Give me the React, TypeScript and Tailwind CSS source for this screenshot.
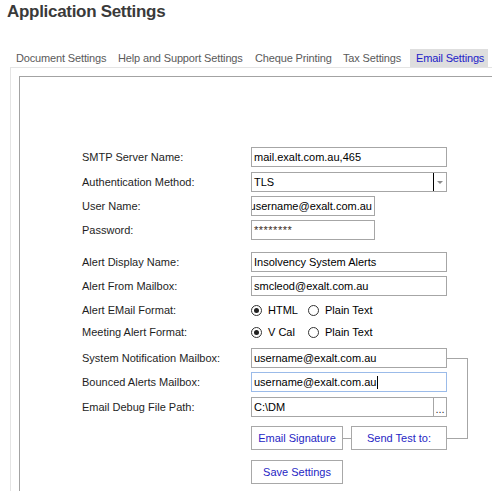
import React from 'react';

const tabs = [
  { label: 'Document Settings', w: 'w-[102px]' },
  { label: 'Help and Support Settings', w: 'w-[137px]' },
  { label: 'Cheque Printing', w: 'w-[88px]' },
  { label: 'Tax Settings', w: 'w-[73px]' },
  { label: 'Email Settings', w: 'w-[78px]', active: true },
];

const Label: React.FC<{ children: React.ReactNode }> = ({ children }) => (
  <div className="w-[169px] shrink-0 text-[#1e1e1e]">{children}</div>
);

const Box: React.FC<{ w?: string; children?: React.ReactNode; focus?: boolean; end?: boolean }> = ({ w = 'w-[196px]', children, focus, end }) => (
  <div className={`${w} h-[20px] border ${focus ? 'border-[#9bbbe9]' : 'border-[#a6a6a6]'} bg-white flex items-center overflow-hidden ${end ? 'justify-end' : ''}`}>
    {children}
  </div>
);

const Radio: React.FC<{ checked?: boolean; label: string; w?: string }> = ({ checked, label, w }) => (
  <div className={`flex items-center ${w ?? ''}`}>
    <div className="w-[11px] h-[11px] rounded-full border border-[#333] flex items-center justify-center bg-white">
      {checked && <div className="w-[5px] h-[5px] rounded-full bg-[#222]" />}
    </div>
    <span className="ml-[6px] text-black">{label}</span>
  </div>
);

const Btn: React.FC<{ w: string; children: React.ReactNode }> = ({ w, children }) => (
  <div className={`${w} h-[24px] border border-[#a8a8a8] bg-white flex items-center justify-center text-[#2626c4] whitespace-nowrap`}>
    {children}
  </div>
);

export default function App() {
  return (
    <div className="w-[492px] h-[491px] overflow-hidden bg-white font-['Liberation_Sans',Arial,sans-serif]">
      <h1 className="pl-[7px] pt-[2px] text-[17px] leading-[20px] font-bold text-[#3a3a3a] tracking-[-0.3px]">
        Application Settings
      </h1>

      {/* tabs */}
      <div className="mt-[27px] pl-[10px] flex h-[18px] text-[11px] leading-[18px] tracking-[-0.15px]">
        {tabs.map(t => (
          <div
            key={t.label}
            className={`${t.w} shrink-0 pl-[6px] whitespace-nowrap ${t.active ? 'bg-[#dedede] text-[#2222c8] pl-[5px]' : 'text-[#5a5a5a]'}`}
          >
            {t.label}
          </div>
        ))}
      </div>

      <div className="ml-[10px] border-l border-t border-[#e4e4e4] pl-[8px] pt-[8px] h-[430px]">
        <div className="border-l border-t border-[#a3a3a3] h-[440px] pl-[62px] pt-[70px] text-[11px] leading-[20px]">
          <div className="relative">
            <div className="flex items-center h-[20px]">
              <Label>SMTP Server Name:</Label>
              <Box><span className="pl-[2px] text-black">mail.exalt.com.au,465</span></Box>
            </div>
            <div className="flex items-center h-[20px] mt-[5px]">
              <Label>Authentication Method:</Label>
              <Box>
                <span className="flex-1 pl-[2px] text-black">TLS</span>
                <div className="w-[13px] h-full border-l border-black flex items-center justify-center">
                  <div className="w-0 h-0 border-l-[3px] border-r-[3px] border-t-[3px] border-l-transparent border-r-transparent border-t-[#8a8a8a]" />
                </div>
              </Box>
            </div>
            <div className="flex items-center h-[20px] mt-[4px]">
              <Label>User Name:</Label>
              <Box w="w-[124px]" end><span className="pr-[2px] text-black whitespace-nowrap shrink-0">username@exalt.com.au</span></Box>
            </div>
            <div className="flex items-center h-[20px] mt-[4px]">
              <Label>Password:</Label>
              <Box w="w-[124px]"><span className="pl-[2px] text-[#3a2a1a] tracking-[0.5px]">********</span></Box>
            </div>

            <div className="flex items-center h-[20px] mt-[12px]">
              <Label>Alert Display Name:</Label>
              <Box><span className="pl-[2px] text-black">Insolvency System Alerts</span></Box>
            </div>
            <div className="flex items-center h-[20px] mt-[4px]">
              <Label>Alert From Mailbox:</Label>
              <Box><span className="pl-[2px] text-black">smcleod@exalt.com.au</span></Box>
            </div>
            <div className="flex items-center h-[20px] mt-[4px]">
              <Label>Alert EMail Format:</Label>
              <Radio checked label="HTML" w="w-[57px]" />
              <Radio label="Plain Text" />
            </div>
            <div className="flex items-center h-[20px] mt-[2px]">
              <Label>Meeting Alert Format:</Label>
              <Radio checked label="V Cal" w="w-[57px]" />
              <Radio label="Plain Text" />
            </div>

            <div className="flex items-center h-[20px] mt-[6px]">
              <Label>System Notification Mailbox:</Label>
              <Box><span className="pl-[2px] text-black">username@exalt.com.au</span></Box>
            </div>
            <div className="flex items-center h-[20px] mt-[4px]">
              <Label>Bounced Alerts Mailbox:</Label>
              <Box focus>
                <span className="pl-[2px] text-black">username@exalt.com.au</span>
                <span className="w-px h-[13px] bg-black ml-[1px]" />
              </Box>
            </div>
            <div className="flex items-center h-[20px] mt-[5px]">
              <Label>Email Debug File Path:</Label>
              <Box>
                <span className="flex-1 pl-[2px] text-black">C:\DM</span>
                <div className="w-[13px] h-full border-l border-[#a6a6a6] flex items-end justify-center text-[#333] leading-[14px]">...</div>
              </Box>
            </div>

            <div className="flex items-center mt-[9px]">
              <div className="w-[169px] shrink-0" />
              <Btn w="w-[92px]">Email Signature</Btn>
              <div className="w-[8px] h-px bg-[#a6a6a6]" />
              <Btn w="w-[96px]">Send Test to:</Btn>
            </div>
            <div className="flex items-center mt-[10px]">
              <div className="w-[169px] shrink-0" />
              <Btn w="w-[92px]">Save Settings</Btn>
            </div>

            {/* test-mail bracket */}
            <div className="absolute left-[365px] top-[211px] w-[21px] h-[81px] border-t border-r border-b border-[#a6a6a6]" />
          </div>
        </div>
      </div>
    </div>
  );
}
